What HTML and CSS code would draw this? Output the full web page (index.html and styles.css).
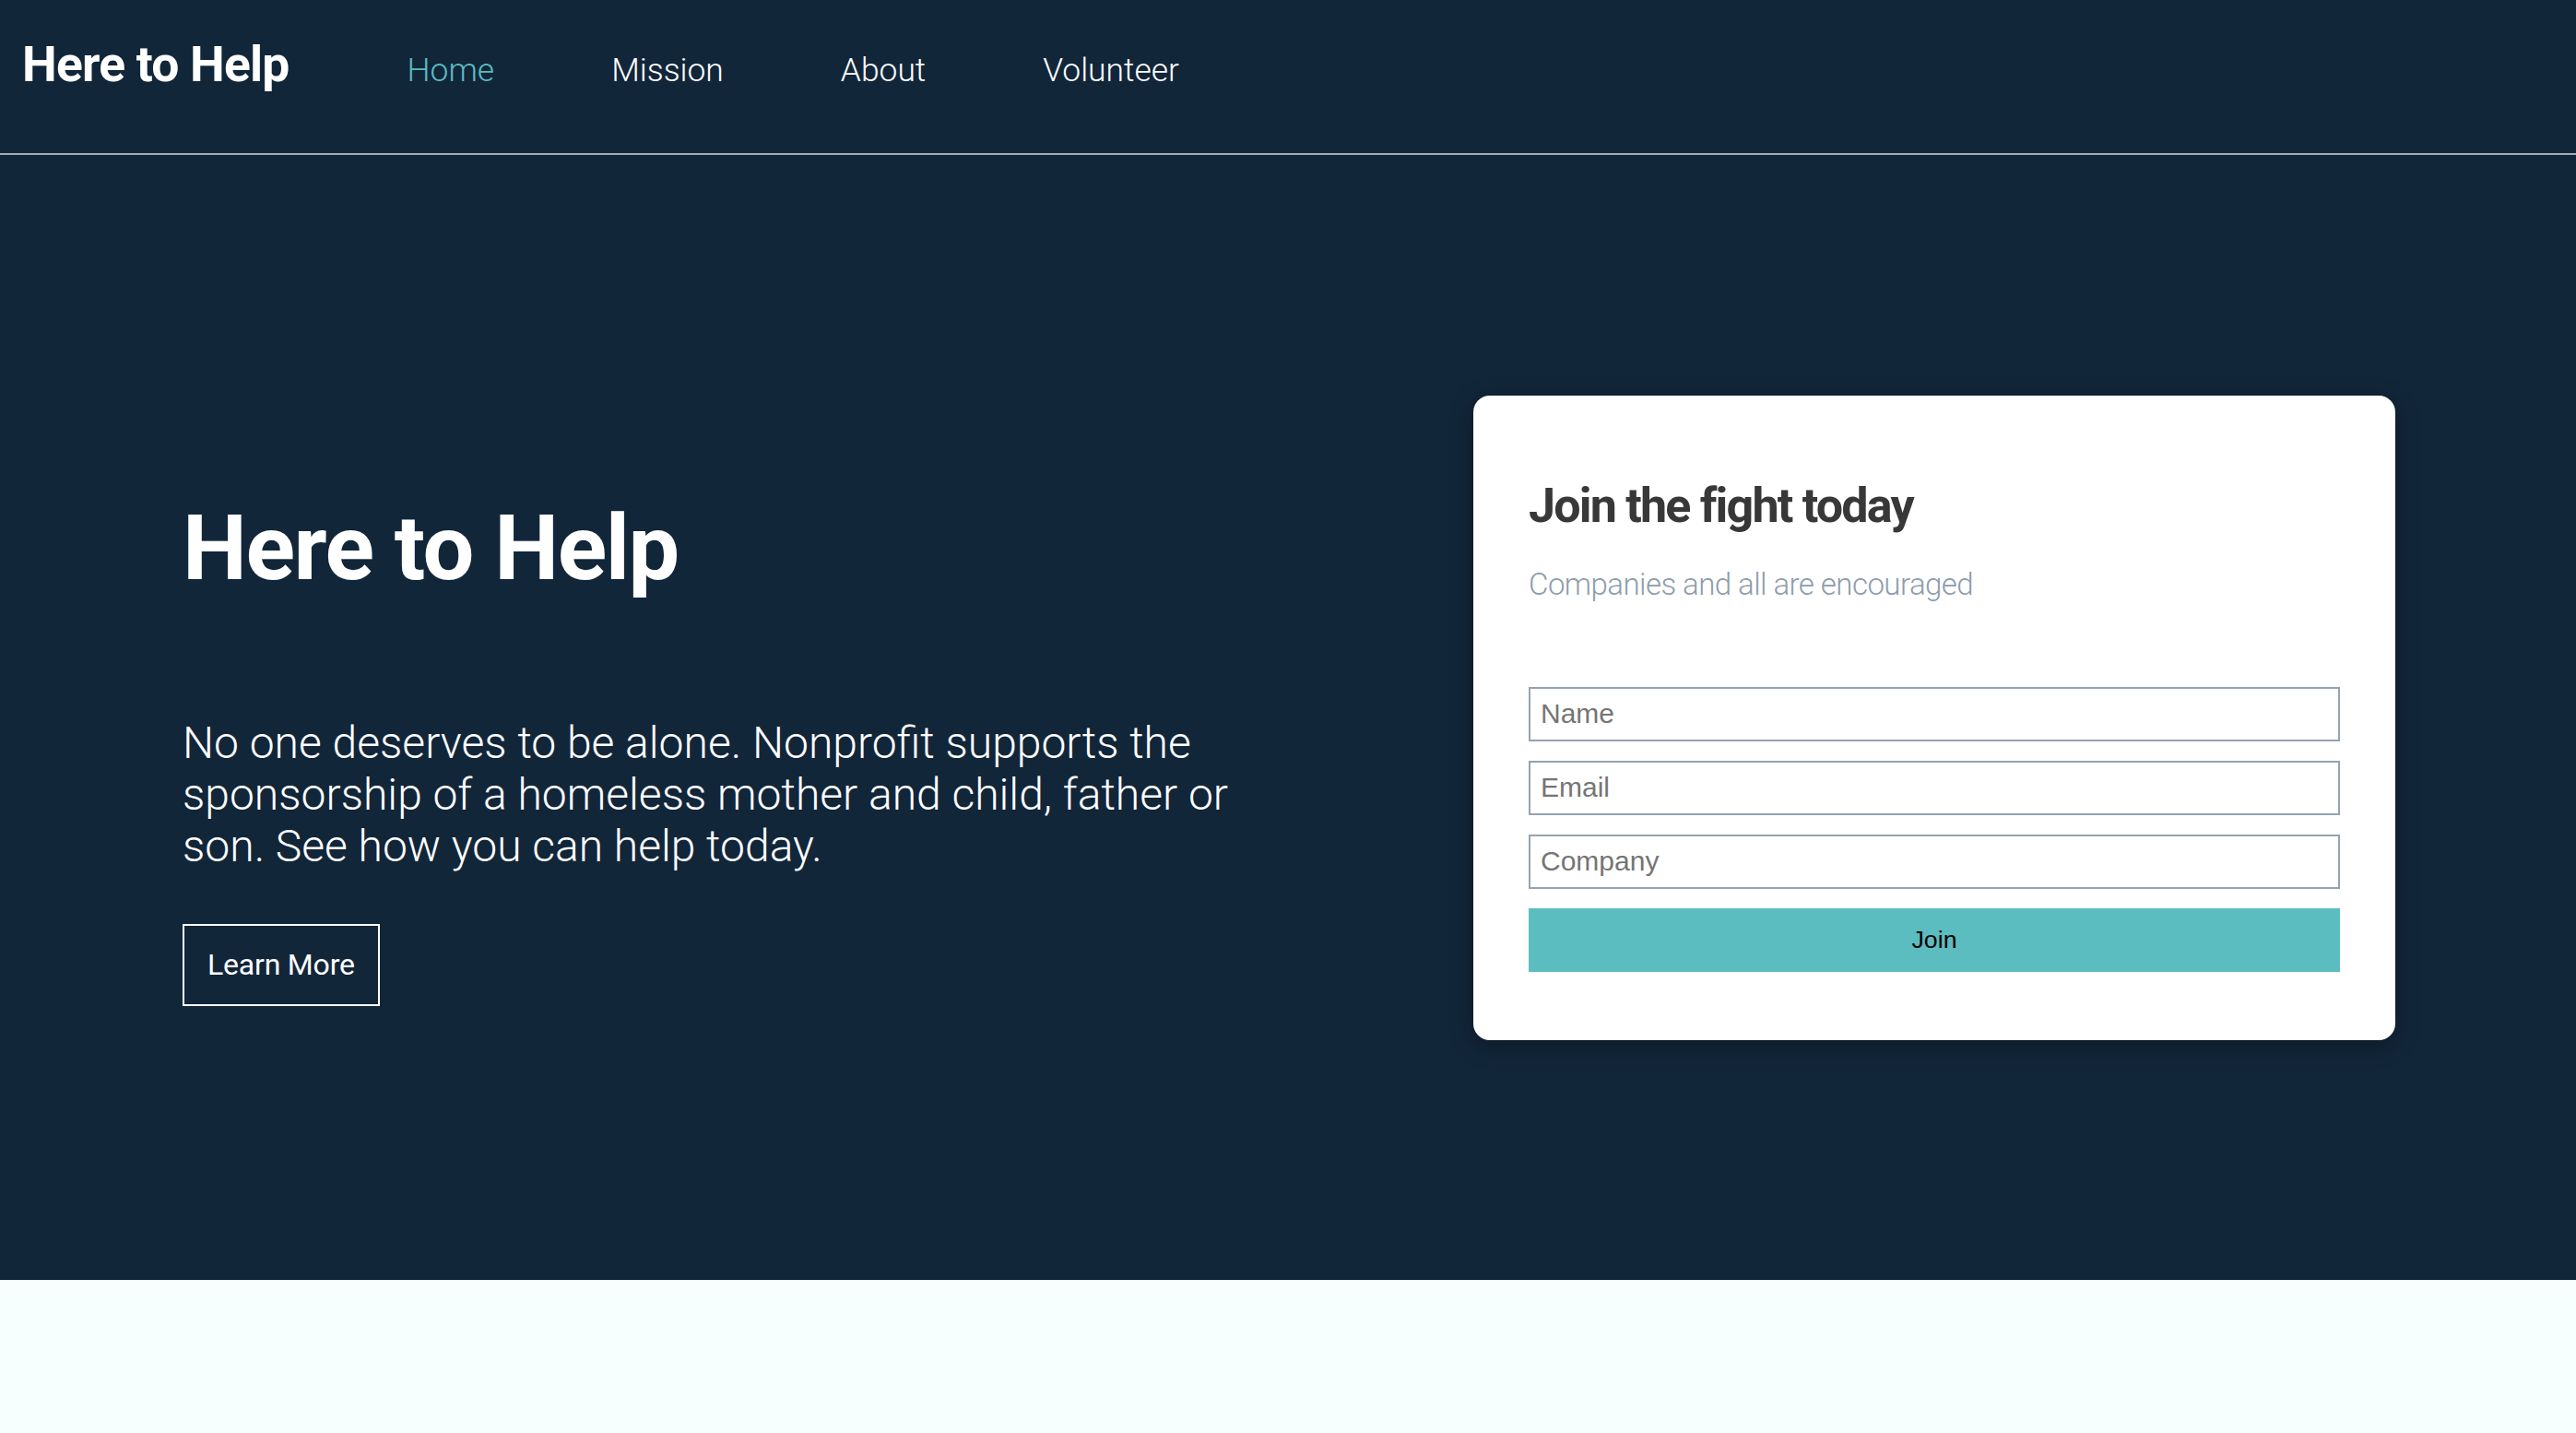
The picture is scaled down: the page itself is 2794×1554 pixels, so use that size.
FILE: index.html
```html
<!DOCTYPE html>
<html lang="en">
<head>
<meta charset="utf-8">
<title>Here to Help</title>
<link rel="stylesheet" href="styles.css">
</head>
<body>
<header class="site-header">
  <div class="logo">Here to Help</div>
  <nav class="nav">
    <a class="nav-link active" href="#">Home</a>
    <a class="nav-link" href="#">Mission</a>
    <a class="nav-link" href="#">About</a>
    <a class="nav-link" href="#">Volunteer</a>
  </nav>
</header>
<section class="hero">
  <div class="hero-text">
    <h1 class="hero-title">Here to Help</h1>
    <p class="hero-lead">No one deserves to be alone. Nonprofit supports the sponsorship of a homeless mother and child, father or son. See how you can help today.</p>
    <a class="btn-outline" href="#">Learn More</a>
  </div>
  <div class="card">
    <h2 class="card-title">Join the fight today</h2>
    <p class="card-sub">Companies and all are encouraged</p>
    <form class="form">
      <input class="field" type="text" placeholder="Name">
      <input class="field" type="email" placeholder="Email">
      <input class="field" type="text" placeholder="Company">
      <button class="btn-join" type="button">Join</button>
    </form>
  </div>
</section>
<section class="below"></section>
</body>
</html>
```
FILE: styles.css
```css
html, body {
  margin: 0;
  padding: 0;
}
body {
  font-family: Roboto, "Liberation Sans", Arial, sans-serif;
  background: #f7fefe;
  min-height: 1554px;
  display: flex;
  flex-direction: column;
}
.site-header {
  background: #12263a;
  display: flex;
  align-items: baseline;
  height: 128px;
  padding: 38px 0 0 24px;
  border-bottom: 2px solid #a4aab2;
}
.logo {
  color: #fff;
  font-weight: 700;
  font-size: 53.4px;
  letter-spacing: -0.8px;
  margin-right: 128px;
}
.nav {
  display: flex;
  align-items: baseline;
  gap: 127px;
}
.nav-link {
  color: #fff;
  text-decoration: none;
  font-weight: 300;
  font-size: 35.4px;
}
.nav-link.active {
  color: #5cbdc0;
}
.hero {
  background: #12263a;
  height: 1220px;
  display: grid;
  grid-template-columns: 1fr 1000px;
  padding: 0 196px 0 198px;
}
.hero-text {
  align-self: start;
  padding-top: 368px;
  max-width: 1180px;
}
.hero-title {
  margin: 0;
  color: #fff;
  font-weight: 700;
  font-size: 99px;
  line-height: 116px;
  letter-spacing: -1.4px;
}
.hero-lead {
  margin: 126px 0 0;
  color: #fff;
  font-weight: 300;
  font-size: 48px;
  line-height: 56px;
}
.btn-outline {
  display: inline-block;
  margin-top: 56px;
  border: 2px solid #fff;
  padding: 24px 25px;
  color: #fff;
  text-decoration: none;
  font-size: 32px;
  line-height: 37px;
  letter-spacing: -0.2px;
}
.card {
  align-self: center;
  background: #fff;
  border-radius: 18px;
  padding: 60px 60px 74px;
  box-shadow: 0 6px 24px rgba(0, 0, 0, 0.35);
}
.card-title {
  margin: 29px 0 0;
  color: #383838;
  font-weight: 700;
  font-size: 52px;
  line-height: 61px;
  letter-spacing: -1.8px;
}
.card-sub {
  margin: 35px 0 0;
  color: #8d9cac;
  font-weight: 300;
  font-size: 33px;
  line-height: 40px;
  letter-spacing: -0.55px;
}
.form {
  margin-top: 91px;
  display: flex;
  flex-direction: column;
  gap: 21px;
}
.field {
  box-sizing: border-box;
  height: 59px;
  width: 100%;
  margin: 0;
  border: 2px solid #95a3b0;
  border-radius: 0;
  padding: 0 11px;
  font-family: "Liberation Sans", Arial, sans-serif;
  font-size: 30px;
  color: #333;
  background: #fff;
  outline: none;
}
.field::placeholder {
  color: #757575;
}
.btn-join {
  height: 69px;
  width: 100%;
  margin: 0;
  border: none;
  background: #5cbdc0;
  color: #000;
  font-family: "Liberation Sans", Arial, sans-serif;
  font-size: 26.7px;
}
.below {
  flex: 1;
  background: #f7fefe;
}
```
